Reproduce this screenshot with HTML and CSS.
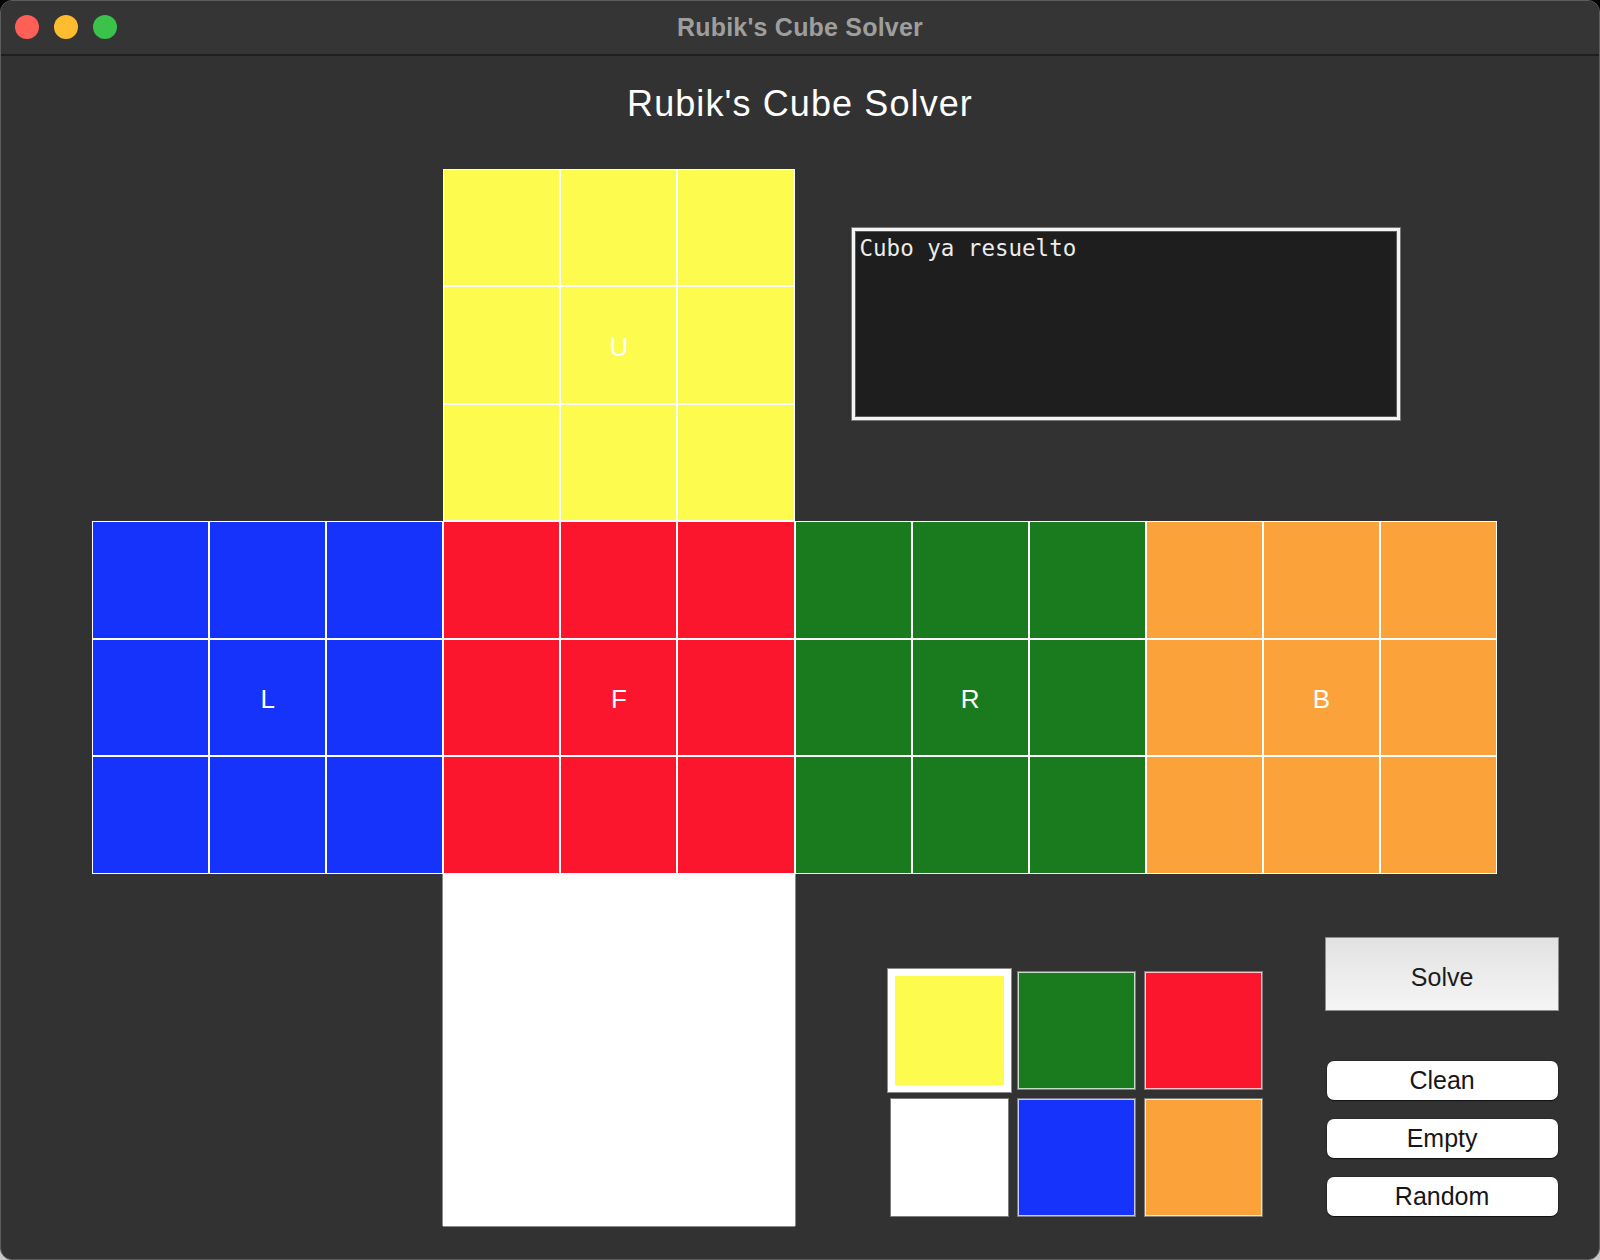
FILE: index.html
```html
<!DOCTYPE html>
<html lang="es">
<head>
<meta charset="utf-8">
<title>Rubik's Cube Solver</title>
<link rel="stylesheet" href="styles.css">
</head>
<body>
<div class="window">
  <div class="titlebar">
    <div class="lights">
      <span class="light red"></span>
      <span class="light yellow"></span>
      <span class="light green"></span>
    </div>
    <div class="wintitle">Rubik's Cube Solver</div>
  </div>
  <div class="content">
    <h1 class="apptitle">Rubik's Cube Solver</h1>
    <div class="net">
      <div class="face face-u">
        <div class="cell y"></div><div class="cell y"></div><div class="cell y"></div>
        <div class="cell y"></div><div class="cell y label">U</div><div class="cell y"></div>
        <div class="cell y"></div><div class="cell y"></div><div class="cell y"></div>
      </div>
      <div class="output">Cubo ya resuelto</div>
      <div class="face face-l">
        <div class="cell b"></div><div class="cell b"></div><div class="cell b"></div>
        <div class="cell b"></div><div class="cell b label">L</div><div class="cell b"></div>
        <div class="cell b"></div><div class="cell b"></div><div class="cell b"></div>
      </div>
      <div class="face face-f">
        <div class="cell r"></div><div class="cell r"></div><div class="cell r"></div>
        <div class="cell r"></div><div class="cell r label">F</div><div class="cell r"></div>
        <div class="cell r"></div><div class="cell r"></div><div class="cell r"></div>
      </div>
      <div class="face face-r">
        <div class="cell g"></div><div class="cell g"></div><div class="cell g"></div>
        <div class="cell g"></div><div class="cell g label">R</div><div class="cell g"></div>
        <div class="cell g"></div><div class="cell g"></div><div class="cell g"></div>
      </div>
      <div class="face face-b">
        <div class="cell o"></div><div class="cell o"></div><div class="cell o"></div>
        <div class="cell o"></div><div class="cell o label">B</div><div class="cell o"></div>
        <div class="cell o"></div><div class="cell o"></div><div class="cell o"></div>
      </div>
      <div class="face face-d">
        <div class="cell w"></div><div class="cell w"></div><div class="cell w"></div>
        <div class="cell w"></div><div class="cell w"></div><div class="cell w"></div>
        <div class="cell w"></div><div class="cell w"></div><div class="cell w"></div>
      </div>
      <div class="controls">
        <div class="palette">
          <div class="swatch y selected"></div>
          <div class="swatch g"></div>
          <div class="swatch r"></div>
          <div class="swatch w"></div>
          <div class="swatch b"></div>
          <div class="swatch o"></div>
        </div>
        <div class="buttons">
          <button class="btn-solve">Solve</button>
          <button class="btn">Clean</button>
          <button class="btn">Empty</button>
          <button class="btn">Random</button>
        </div>
      </div>
    </div>
  </div>
</div>
</body>
</html>
```
FILE: styles.css
```css
* { box-sizing: border-box; }
html, body { margin: 0; padding: 0; }
body {
  width: 1600px;
  height: 1260px;
  background: linear-gradient(#000 0 50%, #c9c9c9 50% 100%);
  font-family: "Liberation Sans", Arial, Helvetica, sans-serif;
  overflow: hidden;
}
.window {
  width: 1600px;
  height: 1260px;
  border: 1px solid #5c5c5c;
  border-radius: 12px;
  background: #323232;
  overflow: hidden;
}
.titlebar {
  position: relative;
  height: 55px;
  background: #353535;
  border-bottom: 2px solid #1f1f1f;
  display: flex;
  align-items: center;
  justify-content: center;
}
.lights {
  position: absolute;
  left: 14px;
  top: 14px;
  display: flex;
  gap: 15px;
}
.light {
  width: 24px;
  height: 24px;
  border-radius: 50%;
  display: block;
}
.light.red { background: #fe5f57; }
.light.yellow { background: #febc2e; }
.light.green { background: #3ac24a; }
.wintitle {
  color: #9e9e9e;
  font-weight: bold;
  font-size: 25px;
  letter-spacing: 0.2px;
}
.content {
  padding: 28px 0 0 91px;
}
.apptitle {
  margin: 0 0 45px -91px;
  text-align: center;
  font-weight: normal;
  color: #ffffff;
  font-size: 36px;
  line-height: 40px;
  letter-spacing: 1.1px;
}
.net {
  display: grid;
  grid-template-columns: repeat(4, 351.25px);
  grid-template-rows: repeat(3, 352.3px);
}
.face {
  display: grid;
  grid-template-columns: repeat(3, 1fr);
  grid-template-rows: repeat(3, 1fr);
}
.face-u { grid-row: 1; grid-column: 2; }
.face-l { grid-row: 2; grid-column: 1; }
.face-f { grid-row: 2; grid-column: 2; }
.face-r { grid-row: 2; grid-column: 3; }
.face-b { grid-row: 2; grid-column: 4; }
.face-d {
  grid-row: 3; grid-column: 2;
  box-shadow: -1px 0 0 #8a8a8a, 1px 0 0 #8a8a8a, 0 1px 0 #8a8a8a;
}
.cell {
  box-shadow: inset 0 0 0 1px #ffffff;
  display: flex;
  align-items: center;
  justify-content: center;
  color: #ffffff;
  font-size: 26px;
}
.cell.label { padding-top: 5px; }
.y { background: #fefb4f; }
.b { background: #1633fb; }
.r { background: #fb162d; }
.g { background: #1a7b1e; }
.o { background: #fca23b; }
.w { background: #ffffff; }

.output {
  grid-row: 1;
  grid-column: 3 / 5;
  align-self: start;
  justify-self: start;
  margin: 59px 0 0 57px;
  width: 548px;
  height: 192px;
  background: #1e1e1e;
  border: 3px solid #f4f4f4;
  box-shadow: inset 0 0 0 1px #5a5a5a, 0 0 0 1px #777;
  padding: 4px 5px;
  color: #ececec;
  font-family: "DejaVu Sans Mono", "Liberation Mono", monospace;
  font-size: 22.5px;
  line-height: 26px;
  white-space: pre;
}

.controls {
  grid-row: 3;
  grid-column: 3 / 5;
  display: flex;
  align-items: flex-start;
  padding-left: 95px;
  gap: 62px;
}
.palette {
  flex-shrink: 0;
  margin-top: 97px;
  display: grid;
  grid-template-columns: repeat(3, 119px);
  grid-template-rows: repeat(2, 119px);
  column-gap: 8.3px;
  row-gap: 8px;
}
.swatch {
  width: 119px;
  height: 119px;
  border: 1px solid #7c7c7c;
  box-shadow: inset 0 0 0 1px rgba(255,255,255,0.75);
}
.swatch.selected {
  width: 125px;
  height: 125px;
  margin: -3px;
  border: 1px solid #8a8a8a;
  box-shadow: inset 0 0 0 7px #ffffff;
}
.buttons {
  flex-shrink: 0;
  width: 234px;
  margin-top: 63px;
  display: flex;
  flex-direction: column;
  align-items: center;
}
.btn-solve {
  width: 234px;
  height: 74px;
  border: 1px solid #8e8e8e;
  background: linear-gradient(#e2e2e2, #f5f5f5);
  font-family: "Liberation Sans", Arial, Helvetica, sans-serif;
  font-size: 25px;
  color: #1c1c1c;
  padding: 7px 0 0;
  margin-bottom: 50px;
}
.btn {
  width: 231px;
  height: 39px;
  border: none;
  border-radius: 7px;
  background: #ffffff;
  box-shadow: 0 1px 1px rgba(0,0,0,0.6), 0 0 0 0.5px rgba(0,0,0,0.3);
  font-family: "Liberation Sans", Arial, Helvetica, sans-serif;
  font-size: 25px;
  color: #161616;
  padding: 0;
  margin-bottom: 19px;
}
```
